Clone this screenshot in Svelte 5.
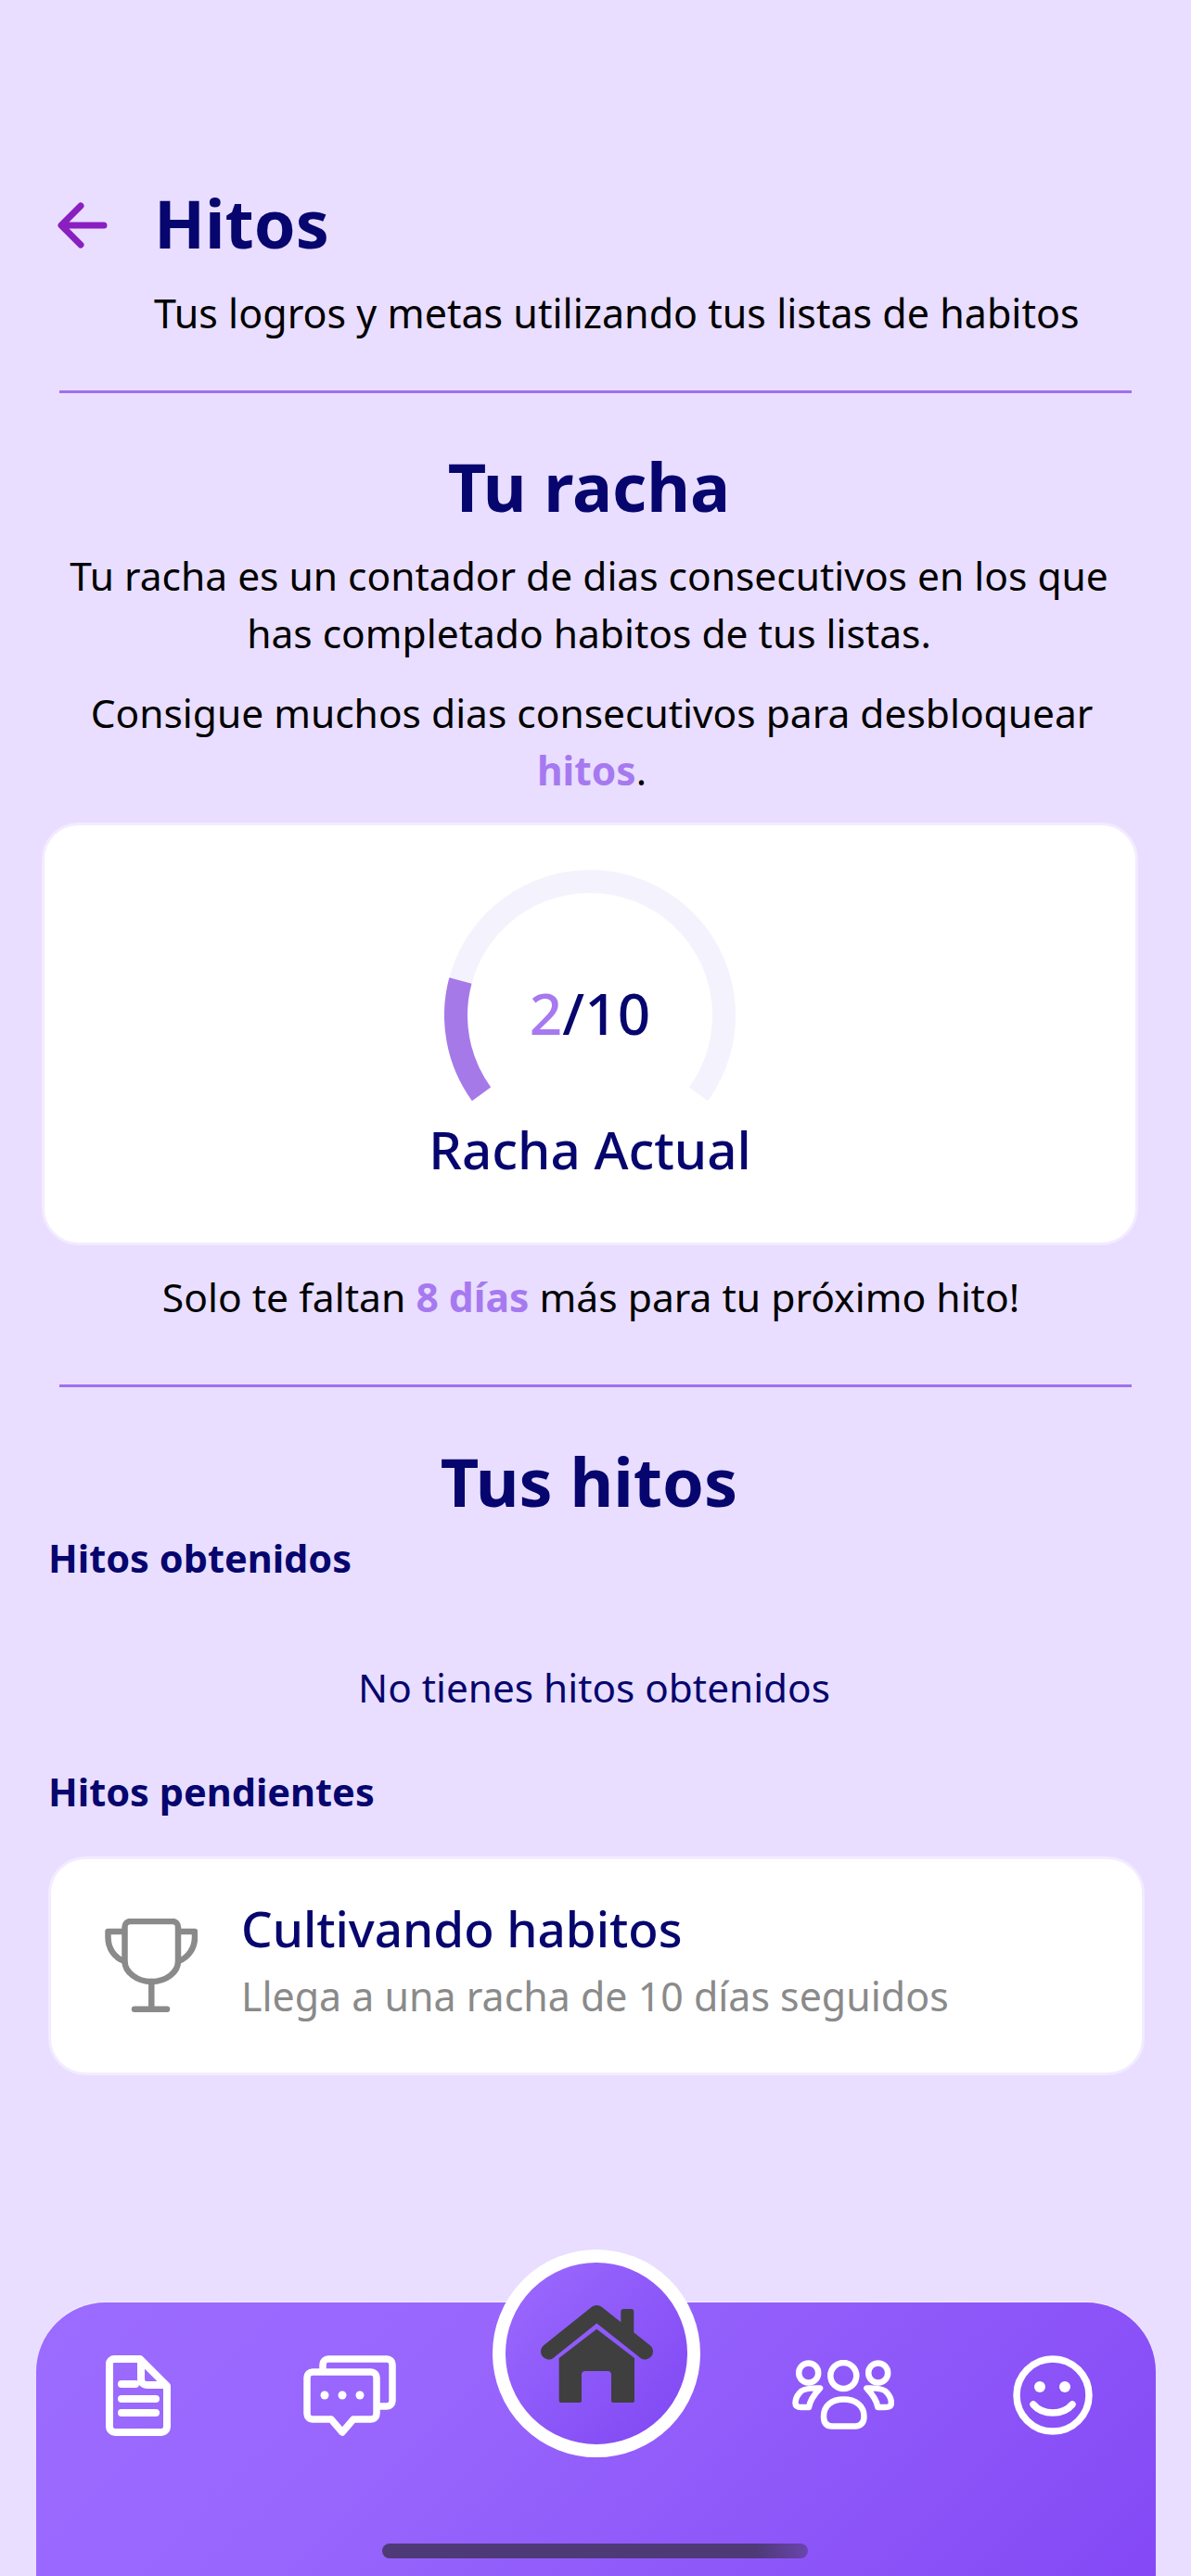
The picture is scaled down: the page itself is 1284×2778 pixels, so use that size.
<script>
  const current = 2
  const goal = 10
</script>

<div class="page">
  <header class="top">
    <svg class="back" viewBox="0 0 54 50" fill="none" stroke="#8a1fc0" stroke-width="7" stroke-linecap="round" stroke-linejoin="round">
      <path d="M50 25H5M25 4 4 25l21 21" />
    </svg>
    <h1>Hitos</h1>
  </header>
  <p class="subtitle">Tus logros y metas utilizando tus listas de habitos</p>
  <hr class="rule first" />

  <h2 class="racha-title">Tu racha</h2>
  <p class="intro">Tu racha es un contador de dias consecutivos en los que has completado habitos de tus listas.</p>
  <p class="intro second">Consigue muchos dias consecutivos para desbloquear <b>hitos</b>.</p>

  <section class="streak-card">
    <div class="gauge">
      <svg viewBox="0 0 314 260" fill="none" stroke-width="25">
        <path d="M40 241.800A144.500 144.500 0 1 1 274 241.800" stroke="#f4f3fd" />
        <path d="M40 241.800A144.500 144.500 0 0 1 17.400 119.600" stroke="#a679e9" />
      </svg>
      <div class="count"><span>{current}</span>/{goal}</div>
    </div>
    <div class="gauge-label">Racha Actual</div>
  </section>

  <p class="remaining">Solo te faltan <b>8 días</b> más para tu próximo hito!</p>
  <hr class="rule second" />

  <h2 class="hitos-title">Tus hitos</h2>
  <h3 class="earned">Hitos obtenidos</h3>
  <p class="empty">No tienes hitos obtenidos</p>
  <h3 class="pending">Hitos pendientes</h3>

  <section class="goal-card">
    <svg class="trophy" viewBox="0 0 100 102" fill="none" stroke="#8a8a8a" stroke-width="6.500" stroke-linecap="round" stroke-linejoin="round">
      <path d="M21.500 46V9a6 6 0 0 1 6-6H73a6 6 0 0 1 6 6V46C79 58 66 68 50.300 68C35 68 21.500 58 21.500 46Z" />
      <path d="M21 14H3.500V20C3.500 32 10 42 21 46M79.500 14H97V20C97 32 90 42 79.500 46" />
      <path d="M50.300 68V97" />
      <path d="M32 97.700H67" />
    </svg>
    <div class="goal-text">
      <div class="goal-name">Cultivando habitos</div>
      <div class="goal-desc">Llega a una racha de 10 días seguidos</div>
    </div>
  </section>

  <nav class="bar">
    <svg class="icon doc" viewBox="0 0 70 87" fill="none" stroke="#fff" stroke-width="8" stroke-linecap="round" stroke-linejoin="round">
      <path d="M9 4H37L66 33V77a6 6 0 0 1-6 6H10a6 6 0 0 1-6-6V9a5 5 0 0 1 5-5z" />
      <path d="M38 6V26a6 6 0 0 0 6 6H64" />
      <path d="M17 31H32M17 47H54M17 62H54" />
    </svg>
    <svg class="icon chat" viewBox="0 0 100 87" fill="none" stroke="#fff" stroke-width="7.500" stroke-linecap="round" stroke-linejoin="round">
      <path d="M10 18H73a6 6 0 0 1 6 6V63a6 6 0 0 1-6 6H54L42 83 30 69H10a6 6 0 0 1-6-6V24a6 6 0 0 1 6-6z" />
      <path d="M21 16V10a6 6 0 0 1 6-6H90a6 6 0 0 1 6 6V49a6 6 0 0 1-6 6H81" />
      <g fill="#fff" stroke="none">
        <circle cx="23" cy="43" r="4.500" />
        <circle cx="42" cy="43" r="4.500" />
        <circle cx="61" cy="43" r="4.500" />
      </g>
    </svg>
    <div class="home">
      <svg viewBox="0 0 121 108">
        <rect x="86.300" y="6" width="14" height="28" rx="3" fill="#3f3f3f" />
        <path d="M8.500 52 60.300 10.500 112.500 52" fill="none" stroke="#3f3f3f" stroke-width="17" stroke-linecap="round" stroke-linejoin="round" />
        <path d="M60.300 27.700 19.700 59V105a2 2 0 0 0 2 2H42a2 2 0 0 0 2-2V77a4 4 0 0 1 4-4H72a4 4 0 0 1 4 4V105a2 2 0 0 0 2 2H99a2 2 0 0 0 2-2V59z" fill="#3f3f3f" />
      </svg>
    </div>
    <svg class="icon group" viewBox="0 0 110 76" fill="none" stroke="#fff" stroke-width="6.500" stroke-linecap="round" stroke-linejoin="round">
      <circle cx="55.300" cy="17" r="14" />
      <circle cx="17.700" cy="14" r="10.500" />
      <circle cx="92.700" cy="14" r="10.500" />
      <path d="M34 61C34 49 43 42.500 55.500 42.500C68 42.500 77.500 49 77.500 61C77.500 68 74 71.500 68 71.500H43C37 71.500 34 68 34 61z" />
      <path d="M30 30.500C20 30 11 31 8 35.500C5 39 3.500 43 3.500 46.500C3.500 49.500 6 51 10 51H18C19 45 23 38 30 30.500z" />
      <path d="M80.400 30.500C90.400 30 99.400 31 102.400 35.500C105.400 39 106.900 43 106.900 46.500C106.900 49.500 104.400 51 100.400 51H92.400C91.400 45 87.400 38 80.400 30.500z" />
    </svg>
    <svg class="icon smile" viewBox="0 0 86 86" fill="none" stroke="#fff" stroke-width="7.500" stroke-linecap="round">
      <circle cx="43" cy="43" r="39" />
      <circle cx="29" cy="34" r="6" fill="#fff" stroke="none" />
      <circle cx="56" cy="34" r="6" fill="#fff" stroke="none" />
      <path d="M22 53C32 65 54 65 64 53" />
    </svg>
    <div class="indicator"></div>
  </nav>
</div>

<style>
  :global(body) {
    margin: 0;
    background: #e9deff;
  }

  .page {
    display: flex;
    flex-direction: column;
    height: 2778px;
    overflow: hidden;
    font-family: 'Noto Sans', 'Open Sans', sans-serif;
    color: #000;
    background: #e9deff;
  }

  h1, h2, h3, p {
    margin: 0;
    font-weight: 400;
  }

  .top {
    display: flex;
    align-items: center;
    gap: 50px;
    margin: 200px 0 0 62px;
  }

  .back {
    width: 54px;
    height: 50px;
    margin-top: 6px;
  }

  h1 {
    font-size: 72px;
    line-height: 80px;
    font-weight: 700;
    color: #06066e;
  }

  .subtitle {
    margin: 28px 0 0 166px;
    font-size: 43px;
    line-height: 60px;
    white-space: nowrap;
  }

  .rule {
    width: 1156px;
    height: 3px;
    margin: 0 0 0 64px;
    border: 0;
    background: #9f70ee;
  }

  .rule.first {
    margin-top: 53px;
  }

  .rule.second {
    margin-top: 65px;
  }

  .racha-title, .hitos-title {
    font-size: 72px;
    line-height: 80px;
    font-weight: 700;
    color: #06066e;
    text-align: center;
    padding-right: 14px;
  }

  .racha-title {
    margin-top: 60px;
  }

  .hitos-title {
    margin-top: 61px;
  }

  .intro {
    width: 1150px;
    margin: 26px 0 0 60px;
    font-size: 42.500px;
    line-height: 62px;
    text-align: center;
  }

  .intro.second {
    margin-top: 24px;
    padding-left: 3px;
  }

  .intro b, .remaining b {
    font-weight: 700;
    color: #a679f0;
  }

  .streak-card {
    box-sizing: border-box;
    width: 1182px;
    height: 456px;
    margin: 25px 0 0 45px;
    padding-top: 48px;
    background: #fff;
    border: 3px solid #f3ebff;
    border-radius: 40px;
  }

  .gauge {
    position: relative;
    width: 314px;
    height: 260px;
    margin: 0 auto;
  }

  .gauge svg {
    display: block;
    width: 314px;
    height: 260px;
  }

  .count {
    position: absolute;
    left: 0;
    right: 0;
    top: 119px;
    font-size: 62px;
    line-height: 70px;
    font-weight: 500;
    color: #06066e;
    text-align: center;
  }

  .count span {
    color: #a679f0;
  }

  .gauge-label {
    margin-top: 12px;
    font-size: 56.500px;
    line-height: 60px;
    font-weight: 500;
    color: #06066e;
    text-align: center;
  }

  .remaining {
    margin: 25px 0 0;
    padding-right: 10px;
    font-size: 42.600px;
    line-height: 60px;
    text-align: center;
  }

  .earned, .pending {
    margin-left: 52px;
    font-size: 41.500px;
    line-height: 50px;
    font-weight: 700;
    color: #06066e;
  }

  .earned {
    margin-top: 18px;
  }

  .empty {
    margin-top: 90px;
    padding-right: 3px;
    font-size: 42.300px;
    line-height: 50px;
    color: #06066e;
    text-align: center;
  }

  .pending {
    margin-top: 62px;
  }

  .goal-card {
    box-sizing: border-box;
    display: flex;
    align-items: center;
    gap: 47px;
    width: 1182px;
    height: 236px;
    margin: 45px 0 0 52px;
    padding: 0 0 0 58px;
    background: #fff;
    border: 3px solid #f3ebff;
    border-radius: 40px;
  }

  .trophy {
    flex: none;
    width: 100px;
    height: 102px;
  }

  .goal-text {
    margin-top: -12px;
  }

  .goal-name {
    font-size: 53px;
    line-height: 70px;
    font-weight: 500;
    color: #06066e;
  }

  .goal-desc {
    margin-top: 8px;
    font-size: 42.900px;
    line-height: 60px;
    color: #8a8a8a;
  }

  .bar {
    position: relative;
    box-sizing: border-box;
    width: 1207px;
    height: 295px;
    margin: auto 0 0 39px;
    background: linear-gradient(135deg, #9c6bff 0%, #9866fd 35%, #8449f5 100%);
    border-radius: 75px 75px 0 0;
    box-shadow: 0 -1px 0 #f3ecff;
  }

  .icon {
    position: absolute;
    top: 57px;
  }

  .doc {
    left: 75px;
    width: 70px;
    height: 87px;
  }

  .chat {
    left: 288px;
    width: 100px;
    height: 87px;
  }

  .group {
    left: 815px;
    top: 62px;
    width: 110px;
    height: 76px;
  }

  .smile {
    left: 1053px;
    width: 86px;
    height: 86px;
  }

  .home {
    position: absolute;
    left: 492px;
    top: -57px;
    box-sizing: border-box;
    display: flex;
    align-items: center;
    justify-content: center;
    width: 224px;
    height: 224px;
    background: linear-gradient(135deg, #9c6aff, #7f47f3);
    border: 14px solid #fff;
    border-radius: 50%;
  }

  .home svg {
    width: 121px;
    height: 108px;
  }

  .indicator {
    position: absolute;
    left: 373px;
    top: 260px;
    width: 459px;
    height: 16px;
    background: linear-gradient(90deg, #4f3a78 88%, #6a45ad);
    border-radius: 8px;
  }
</style>
